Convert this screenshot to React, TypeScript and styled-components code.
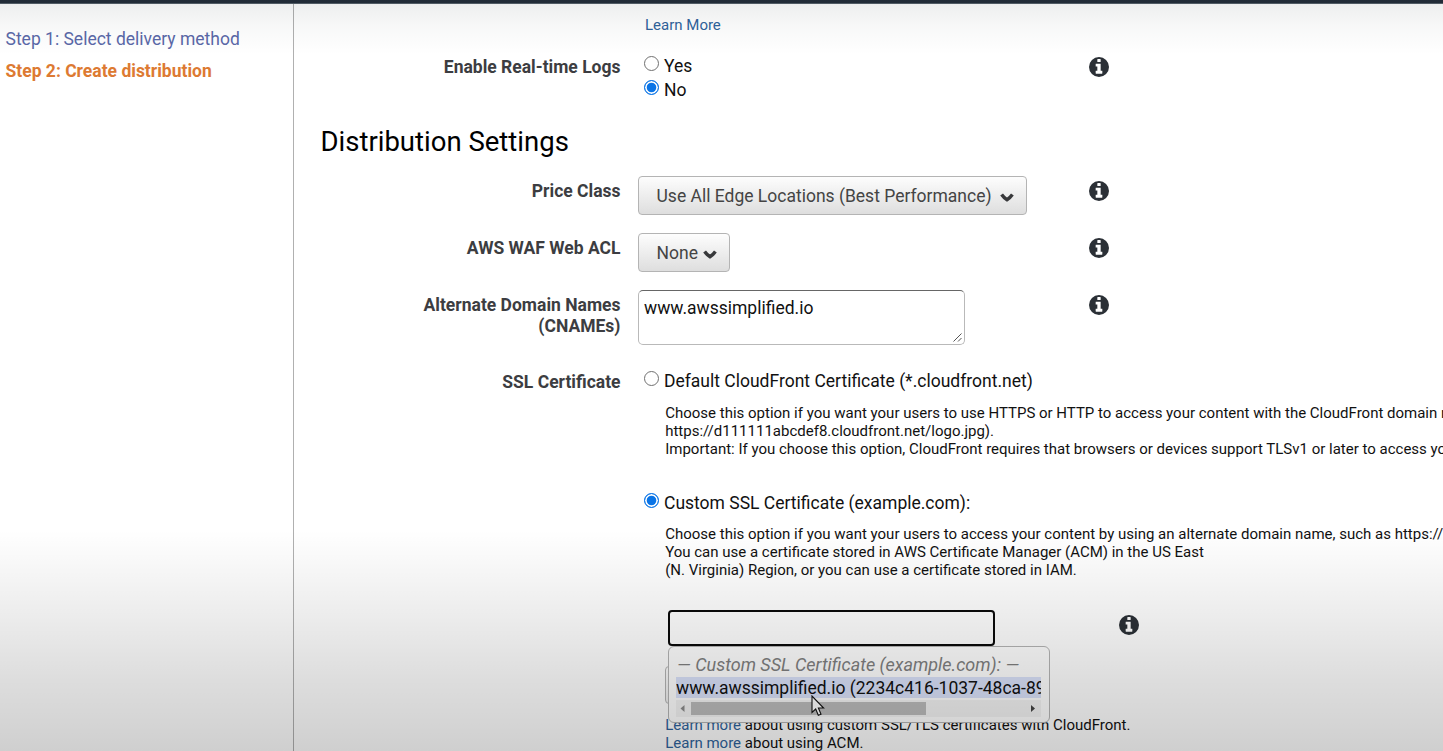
import React from 'react';
import styled, { createGlobalStyle } from 'styled-components';

const GlobalStyle = createGlobalStyle`
  *, *::before, *::after { box-sizing: border-box; }
  html, body { margin: 0; overflow: hidden; }
  body { font-family: Roboto, sans-serif; font-size: 17.5px; color: #111; background: #fff; }
`;

const Page = styled.div`
  position: relative;
  height: 751px;
  overflow: hidden;
  display: flex;
  flex-direction: column;
  background: #fff;
`;

const TopBar = styled.div`
  flex: none;
  height: 4px;
  background: #232d3a;
  border-bottom: 1px solid #56606a;
`;

const Body = styled.div`
  flex: 1;
  min-height: 0;
  display: flex;
`;

const Sidebar = styled.nav`
  flex: none;
  width: 294px;
  padding: 19px 0 0 5.5px;
  border-right: 1px solid #b0b0b0;
`;

const Step = styled.div<{ $active?: boolean }>`
  line-height: 32px;
  color: ${p => (p.$active ? '#dd7a32' : '#5a68a8')};
  font-weight: ${p => (p.$active ? 700 : 400)};
`;

const Main = styled.main`
  flex: 1;
  min-width: 0;
  overflow: hidden;
  padding: 12px 0 0 27px;
`;

const Link = styled.a`
  color: #2f639c;
  text-decoration: none;
`;

const TopNote = styled.div`
  padding-left: 324px;
  font-size: 15px;
  line-height: 18px;
`;

const Heading = styled.h2`
  margin: 24px 0 18px -0.5px;
  font-size: 27.5px;
  font-weight: 400;
  line-height: 32px;
  color: #000;
`;

const Row = styled.div<{ $gap?: number }>`
  position: relative;
  display: flex;
  margin-top: ${p => p.$gap ?? 18}px;
`;

const Label = styled.div<{ $top: number }>`
  flex: none;
  width: 299.5px;
  margin-right: -0.5px;
  padding-top: ${p => p.$top}px;
  font-weight: 700;
  line-height: 21px;
  text-align: right;
  color: #3c3d41;
`;

const Control = styled.div`
  flex: none;
  width: 469px;
  padding-left: 18px;
`;

const InfoSvg = styled.svg<{ $top: number; $left?: number }>`
  flex: none;
  width: 20px;
  height: 20px;
  margin: ${p => p.$top}px 0 0 ${p => p.$left ?? 0}px;
  fill: #2b3036;
`;

const RadioLine = styled.label`
  display: flex;
  align-items: flex-start;
  padding-left: 6px;
  line-height: 24px;
  gap: 5px;
  white-space: nowrap;
`;

const Radio = styled.span<{ $on?: boolean }>`
  flex: none;
  width: 15px;
  height: 15px;
  margin-top: 2px;
  border-radius: 50%;
  border: ${p => (p.$on ? '1.5px solid #0a74e6' : '1px solid #707070')};
  background: ${p => (p.$on ? '#0a74e6' : '#fff')};
  box-shadow: ${p => (p.$on ? 'inset 0 0 0 1.7px #fff' : 'none')};
`;

const SelectButton = styled.button<{ $gap: number }>`
  display: flex;
  align-items: center;
  height: 39px;
  padding: 0 12px 0 17.5px;
  gap: ${p => p.$gap}px;
  border: 1px solid #b4b4b4;
  border-radius: 4px;
  background: linear-gradient(#fdfdfd, #dedede);
  font: 400 17.5px Roboto, sans-serif;
  color: #444;
  white-space: nowrap;
`;

const Caret = styled.svg`
  width: 14px;
  height: 10px;
  margin-top: 4px;
`;

const TextBox = styled.div`
  position: relative;
  width: 327px;
  height: 55px;
  padding: 5px;
  border: 1px solid #b9b9b9;
  border-top-color: #666;
  border-radius: 5px;
  line-height: 24px;
`;

const Grip = styled.svg`
  position: absolute;
  right: 2px;
  bottom: 2px;
  width: 9px;
  height: 9px;
`;

const Wide = styled.div`
  flex: none;
  width: 900px;
  padding-left: 18px;
`;

const Help = styled.p<{ $top: number }>`
  margin: ${p => p.$top}px 0 0 27.2px;
  font-size: 15px;
  line-height: 18px;
  white-space: nowrap;
`;

const CertArea = styled.div`
  position: relative;
  display: flex;
  height: 106px;
  margin: 31px 0 0 27px;
`;

const CertInput = styled.div`
  width: 327px;
  height: 36px;
  margin-left: 3px;
  border: 2px solid #0a0a0a;
  border-radius: 4px;
  background: #fff;
`;

const HiddenButton = styled.div`
  position: absolute;
  left: 0;
  top: 56px;
  width: 200px;
  height: 38px;
  border: 1px solid #b4b4b4;
  border-radius: 4px;
  background: linear-gradient(#fdfdfd, #eee);
`;

const Popup = styled.div`
  position: absolute;
  z-index: 2;
  left: 3px;
  top: 36px;
  width: 382px;
  height: 77px;
  padding: 7px 8px 0 7px;
  border: 1px solid #b5b5b5;
  border-radius: 6px;
  background: #fff;
`;

const GroupName = styled.div`
  height: 23px;
  padding-left: 1px;
  line-height: 21px;
  font-size: 18px;
  font-style: italic;
  color: #808080;
  white-space: nowrap;
`;

const Option = styled.div`
  height: 21px;
  line-height: 22px;
  overflow: hidden;
  white-space: nowrap;
  background: #dbe3fb;
`;

const Scrollbar = styled.div`
  display: flex;
  align-items: center;
  height: 17px;
  margin-top: 2px;
  background: #f4f4f4;
`;

const Thumb = styled.div`
  width: 235px;
  height: 13px;
  background: #bcbcbc;
`;

const Arrow = styled.svg`
  width: 15px;
  height: 9px;
`;

const Spacer = styled.div`
  flex: 1;
`;

const Footnote = styled.div`
  margin-left: 27.2px;
  font-size: 15px;
  line-height: 18px;
  white-space: nowrap;
`;

const Cursor = styled.svg`
  position: absolute;
  z-index: 3;
  left: 145.5px;
  top: 84.5px;
  width: 14px;
  height: 22px;
`;

const Shade = styled.div`
  position: absolute;
  z-index: 5;
  inset: 0;
  pointer-events: none;
  background:
    linear-gradient(rgba(0,20,20,.07) 4px, rgba(0,20,20,.03) 25px, rgba(0,20,20,0) 55px),
    linear-gradient(transparent 530px, rgba(0,0,0,.04) 575px, rgba(0,0,0,.08) 620px, rgba(0,0,0,.135) 680px, rgba(0,0,0,.19) 751px);
`;

function Info({ top, left }: { top: number; left?: number }) {
  return (
    <InfoSvg $top={top} $left={left} viewBox="128 128 1536 1536">
      <path d="M1152 1376v-160q0-14-9-23t-23-9h-96V672q0-14-9-23t-23-9H672q-14 0-23 9t-9 23v160q0 14 9 23t23 9h96v320h-96q-14 0-23 9t-9 23v160q0 14 9 23t23 9h448q14 0 23-9t9-23zm-128-896V320q0-14-9-23t-23-9H800q-14 0-23 9t-9 23v160q0 14 9 23t23 9h192q14 0 23-9t9-23zm640 416a768 768 0 1 1-1536 0a768 768 0 1 1 1536 0z" fillRule="evenodd" />
    </InfoSvg>
  );
}

function Select({ gap, children }: { gap: number; children: React.ReactNode }) {
  return (
    <SelectButton $gap={gap}>
      {children}
      <Caret viewBox="0 0 14 10">
        <path d="M1.6 1.6Q4 5 7 6.7Q10 5 12.4 1.6" fill="none" stroke="#38393b" strokeWidth="3.4" />
      </Caret>
    </SelectButton>
  );
}

export default function App() {
  return (
    <Page>
      <GlobalStyle />
      <TopBar />
      <Body>
        <Sidebar>
          <Step>Step 1: Select delivery method</Step>
          <Step $active>Step 2: Create distribution</Step>
        </Sidebar>
        <Main>
          <TopNote><Link>Learn More</Link></TopNote>
          <Row $gap={20}>
            <Label $top={3}>Enable Real-time Logs</Label>
            <Control>
              <RadioLine><Radio />Yes</RadioLine>
              <RadioLine><Radio $on />No</RadioLine>
            </Control>
            <Info top={3} />
          </Row>
          <Heading>Distribution Settings</Heading>
          <Row $gap={0}>
            <Label $top={5}>Price Class</Label>
            <Control><Select gap={8.5}>Use All Edge Locations (Best Performance)</Select></Control>
            <Info top={5} />
          </Row>
          <Row>
            <Label $top={5}>AWS WAF Web ACL</Label>
            <Control><Select gap={5.5}>None</Select></Control>
            <Info top={5} />
          </Row>
          <Row>
            <Label $top={5}>Alternate Domain Names<br />(CNAMEs)</Label>
            <Control>
              <TextBox>
                www.awssimplified.io
                <Grip viewBox="0 0 9 9"><path d="M.5 8.5L8.5.5M5 8.5L8.5 5" stroke="#555" fill="none" /></Grip>
              </TextBox>
            </Control>
            <Info top={5} />
          </Row>
          <Row $gap={24}>
            <Label $top={3}>SSL Certificate</Label>
            <Wide>
              <RadioLine><Radio />Default CloudFront Certificate (*.cloudfront.net)</RadioLine>
              <Help $top={11}>
                Choose this option if you want your users to use HTTPS or HTTP to access your content with the CloudFront domain name (such as<br />
                https://d111111abcdef8.cloudfront.net/logo.jpg).<br />
                Important: If you choose this option, CloudFront requires that browsers or devices support TLSv1 or later to access your content.
              </Help>
            </Wide>
          </Row>
          <Row $gap={33}>
            <Label $top={0} />
            <Wide>
              <RadioLine><Radio $on />Custom SSL Certificate (example.com):</RadioLine>
              <Help $top={10}>
                Choose this option if you want your users to access your content by using an alternate domain name, such as https://www.example.com<br />
                You can use a certificate stored in AWS Certificate Manager (ACM) in the US East<br />
                (N. Virginia) Region, or you can use a certificate stored in IAM.
              </Help>
              <CertArea>
                <HiddenButton />
                <CertInput />
                <Info top={5} left={124} />
                <Popup>
                  <GroupName>— Custom SSL Certificate (example.com): —</GroupName>
                  <Option>www.awssimplified.io (2234c416-1037-48ca-89</Option>
                  <Scrollbar>
                    <Arrow viewBox="0 0 15 9"><path d="M8.5 1v7L4.5 4.5z" fill="#8c8c8c" /></Arrow>
                    <Thumb />
                    <Spacer />
                    <Arrow viewBox="0 0 15 9"><path d="M5 1v7L9 4.5z" fill="#444" /></Arrow>
                  </Scrollbar>
                </Popup>
                <Cursor viewBox="0 0 14 22">
                  <path d="M1 1V17.5L4.7 14L7.3 20.3L10 19.2L7.4 13H12.6Z" fill="#fff" stroke="#111" strokeWidth="1.1" />
                </Cursor>
              </CertArea>
              <Footnote><Link>Learn more</Link> about using custom SSL/TLS certificates with CloudFront.</Footnote>
              <Footnote><Link>Learn more</Link> about using ACM.</Footnote>
            </Wide>
          </Row>
        </Main>
      </Body>
      <Shade />
    </Page>
  );
}
